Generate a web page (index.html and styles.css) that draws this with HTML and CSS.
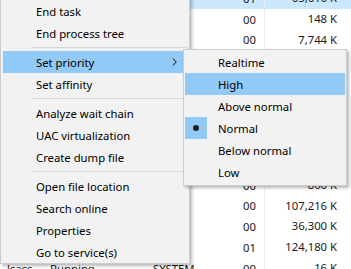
FILE: index.html
```html
<!DOCTYPE html>
<html lang="en">
<head>
    <meta charset="UTF-8">
    <meta name="viewport" content="width=device-width, initial-scale=1.0">
    <title>Task Manager - context menu</title>
    <link rel="stylesheet" href="styles.css">
</head>
<body>
    <!-- process list behind the menu -->
    <div class="table">
        <div class="row selected"><span class="name">Desktop Window Manager</span><span class="cpu">01</span><span class="mem">65,616 K</span></div>
        <div class="row"><span class="name">Host Process</span><span class="cpu">00</span><span class="mem">148 K</span></div>
        <div class="row"><span class="name">Service Host</span><span class="cpu">00</span><span class="mem">7,744 K</span></div>
        <div class="row"><span class="name">Runtime Broker</span><span class="cpu">00</span><span class="mem">2,104 K</span></div>
        <div class="row"><span class="name">Search Indexer</span><span class="cpu">00</span><span class="mem">9,220 K</span></div>
        <div class="row"><span class="name">Shell Host</span><span class="cpu">00</span><span class="mem">4,512 K</span></div>
        <div class="row"><span class="name">Print Spooler</span><span class="cpu">00</span><span class="mem">3,180 K</span></div>
        <div class="row"><span class="name">Windows Explorer</span><span class="cpu">00</span><span class="mem">41,032 K</span></div>
        <div class="row"><span class="name">System</span><span class="cpu">00</span><span class="mem">1,240 K</span></div>
        <div class="row"><span class="name">svchost.exe</span><span class="cpu">00</span><span class="mem">860 K</span></div>
        <div class="row"><span class="name">chrome.exe</span><span class="cpu">00</span><span class="mem">107,216 K</span></div>
        <div class="row"><span class="name">chrome.exe</span><span class="cpu">00</span><span class="mem">36,300 K</span></div>
        <div class="row"><span class="name">chrome.exe</span><span class="cpu">01</span><span class="mem">124,180 K</span></div>
        <div class="row"><span class="name"><span class="proc">lsass</span><span class="state">Running</span><span class="user">SYSTEM</span></span><span class="cpu">00</span><span class="mem">16 K</span></div>
    </div>

    <!-- right-click menu -->
    <div class="menu main-menu">
        <div class="item"><span class="check"></span>End task</div>
        <div class="item"><span class="check"></span>End process tree</div>
        <div class="separator"></div>
        <div class="item active"><span class="check"></span>Set priority
            <svg class="arrow" width="5" height="8" viewBox="0 0 5 8"><path d="M1 0.5L4 4L1 7.5" fill="none" stroke="#333" stroke-width="1.1"/></svg>
        </div>
        <div class="item"><span class="check"></span>Set affinity</div>
        <div class="separator"></div>
        <div class="item"><span class="check"></span>Analyze wait chain</div>
        <div class="item"><span class="check"></span>UAC virtualization</div>
        <div class="item"><span class="check"></span>Create dump file</div>
        <div class="separator"></div>
        <div class="item"><span class="check"></span>Open file location</div>
        <div class="item"><span class="check"></span>Search online</div>
        <div class="item"><span class="check"></span>Properties</div>
        <div class="item"><span class="check"></span>Go to service(s)</div>
    </div>

    <!-- priority submenu -->
    <div class="menu sub-menu">
        <div class="item"><span class="check"></span>Realtime</div>
        <div class="item active"><span class="check"></span>High</div>
        <div class="item"><span class="check"></span>Above normal</div>
        <div class="item"><span class="check checked"><span class="bullet"></span></span>Normal</div>
        <div class="item"><span class="check"></span>Below normal</div>
        <div class="item"><span class="check"></span>Low</div>
    </div>
</body>
</html>
```

FILE: styles.css
```css
body {
    margin: 0;
    width: 351px;
    height: 269px;
    overflow: hidden;
    position: relative;
    background-color: white;
    font-family: "Noto Sans", "Open Sans", sans-serif;
    font-size: 11.3px;
    color: #000;
}

/* process list */
.table {
    margin-top: -12px;
}

.row {
    display: flex;
    align-items: center;
    height: 20.75px;
    color: #1a1a1a;
}

.row.selected {
    background-color: #cce8ff;
}

.name {
    flex: 1;
    padding-left: 7px;
    display: flex;
    white-space: nowrap;
    overflow: hidden;
}

.proc {
    width: 43px;
}

.state {
    width: 103px;
}

.cpu {
    width: 30px;
    padding-right: 8px;
    text-align: right;
}

.mem {
    width: 72px;
    padding-right: 14px;
    text-align: right;
    border-left: 1px solid #ececec;
    height: 100%;
    line-height: 20.75px;
}

/* menus */
.menu {
    position: absolute;
    background-color: #f2f2f2;
    border: 1px solid #cccccc;
    box-shadow: 2px 2px 3px rgba(0, 0, 0, 0.28);
}

.main-menu {
    left: 0;
    top: -3px;
    width: 184px;
    padding: 2px 2px 0 2px;
}

.sub-menu {
    left: 183px;
    top: 49px;
    width: 160px;
    padding: 1px 1px 2px 1px;
}

.item {
    display: flex;
    align-items: center;
    height: 22px;
    white-space: nowrap;
}

.item.active {
    background-color: #91c9f7;
}

.check {
    width: 22px;
    height: 22px;
    margin-right: 11px;
    display: flex;
    align-items: center;
    justify-content: center;
}

.check.checked {
    background-color: #91c9f7;
}

.bullet {
    width: 6px;
    height: 6px;
    border-radius: 50%;
    background-color: #222;
}

.arrow {
    margin-left: auto;
    margin-right: 10px;
}

.separator {
    height: 1px;
    background-color: #d7d7d7;
    margin: 3px 0 3px 29px;
}
```
